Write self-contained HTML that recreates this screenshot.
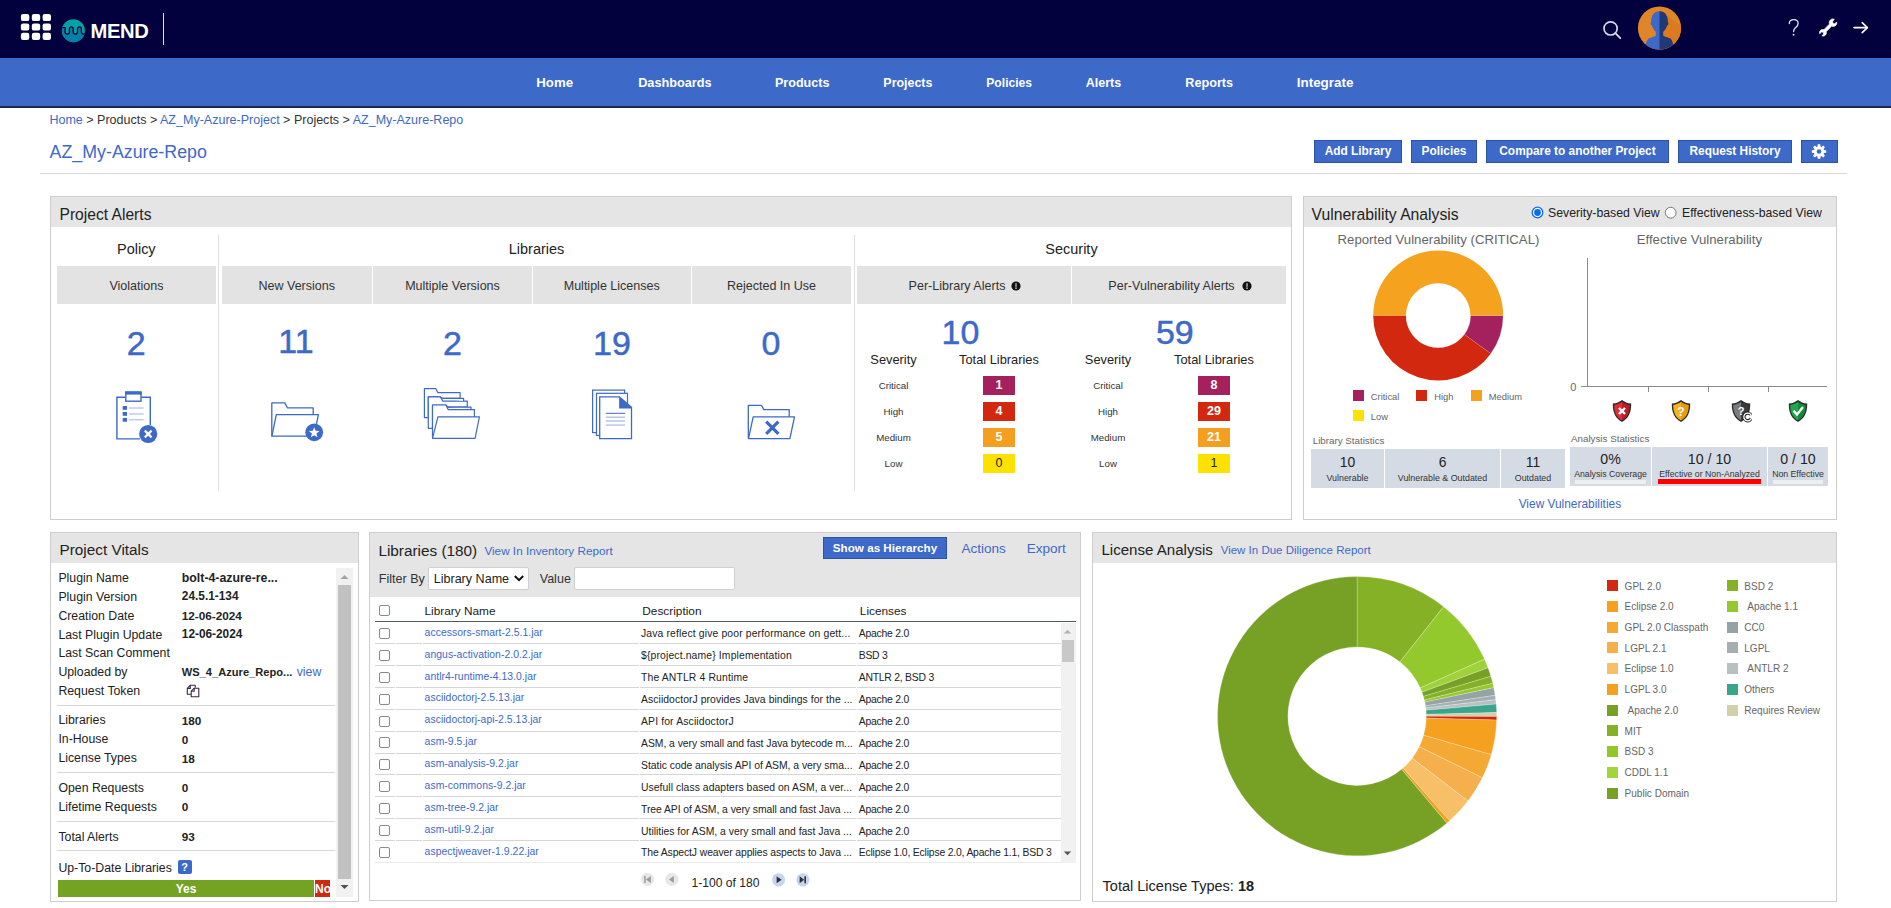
<!DOCTYPE html>
<html><head><meta charset="utf-8"><title>AZ_My-Azure-Repo</title>
<style>
*{box-sizing:border-box;margin:0;padding:0}
html,body{width:1891px;height:908px;overflow:hidden;background:#fff;font-family:"Liberation Sans",sans-serif;color:#333}
.a{position:absolute;display:block}
.t{position:absolute;white-space:nowrap}
</style></head><body>
<div class="a" style="left:0px;top:0px;width:1891px;height:58px;background:#02003d;"></div>
<svg class="a" style="left:0px;top:0px" width="60" height="50" viewBox="0 0 60 50"><rect x="20.9" y="13.9" width="8.4" height="7.2" rx="2.2" fill="#fff"/><rect x="31.8" y="13.9" width="8.4" height="7.2" rx="2.2" fill="#fff"/><rect x="42.6" y="13.9" width="8.4" height="7.2" rx="2.2" fill="#fff"/><rect x="20.9" y="23.4" width="8.4" height="7.2" rx="2.2" fill="#fff"/><rect x="31.8" y="23.4" width="8.4" height="7.2" rx="2.2" fill="#fff"/><rect x="42.6" y="23.4" width="8.4" height="7.2" rx="2.2" fill="#fff"/><rect x="20.9" y="32.8" width="8.4" height="7.2" rx="2.2" fill="#fff"/><rect x="31.8" y="32.8" width="8.4" height="7.2" rx="2.2" fill="#fff"/><rect x="42.6" y="32.8" width="8.4" height="7.2" rx="2.2" fill="#fff"/></svg>
<svg class="a" style="left:55px;top:13px" width="30" height="36" viewBox="0 0 30 36"><defs><clipPath id="lc"><circle cx="18.4" cy="17.7" r="11.5"/></clipPath></defs>
<circle cx="18.4" cy="17.7" r="11.5" fill="#00a3a5"/>
<g clip-path="url(#lc)"><path d="M0,14.6 H10.1 V19.1 Q10.1,21.1 12.25,21.1 Q14.4,21.1 14.4,19.1 V15.9 Q14.4,13.9 16.3,13.9 Q18.2,13.9 18.2,15.9 V19.1 Q18.2,21.1 20.35,21.1 Q22.5,21.1 22.5,19.1 V15.9 Q22.5,13.9 24.45,13.9 Q26.4,13.9 26.4,15.9 V19.1 Q26.4,21.1 28.5,21.1 H40 V40 H0 Z" fill="#0281a6" stroke="#02003d" stroke-width="1.3"/></g></svg>
<div class="t" style="top:21.30px;font-size:20.2px;line-height:20.2px;color:#fff;font-weight:bold;letter-spacing:-0.333px;left:90.50px;"><span>MEND</span></div>
<div class="a" style="left:163px;top:13px;width:1px;height:32px;background:#e0e0e8;"></div>
<svg class="a" style="left:1598px;top:15px" width="28" height="28" viewBox="0 0 28 28"><circle cx="12.6" cy="13.4" r="6.6" fill="none" stroke="#d9d9e3" stroke-width="1.7"/><line x1="17.4" y1="18.2" x2="22.3" y2="23.2" stroke="#d9d9e3" stroke-width="1.8" stroke-linecap="round"/></svg>
<svg class="a" style="left:1636px;top:4px" width="48" height="48" viewBox="0 0 48 48"><defs><clipPath id="av"><circle cx="23.5" cy="24" r="21.6"/></clipPath></defs>
<circle cx="23.5" cy="24" r="21.6" fill="#e08628"/>
<g clip-path="url(#av)">
<path d="M23.5,7 L46,22 L46,46 L23.5,46 Z" fill="#db7a1e"/>
<path d="M24,7.2 L23.5,7.2 C17.5,7.2 15.2,12 15.2,16.5 C15.2,18 14.6,18.3 14.6,19.4 C14.6,20.8 15.5,21.4 15.9,21.6 C16.6,24.5 18.3,26.6 19.8,27.8 L19.8,31.2 C19.8,32.2 17,32.8 13.5,34 C11.5,34.8 10.4,37 10,40 L9.6,48 L24,48 L24,7.2 Z" fill="#3d69c8"/>
<path d="M23.5,7.2 C29.5,7.2 31.8,12 31.8,16.5 C31.8,18 32.4,18.3 32.4,19.4 C32.4,20.8 31.5,21.4 31.1,21.6 C30.4,24.5 28.7,26.6 27.2,27.8 L27.2,31.2 C27.2,32.2 30,32.8 33.5,34 C35.5,34.8 36.6,37 37,40 L37.4,48 L23.5,48 Z" fill="#223877"/>
</g></svg>
<svg class="a" style="left:1785px;top:16px" width="18" height="22" viewBox="0 0 18 22"><path d="M4.3,7.6 C4.3,4.8 6.3,3.6 8.7,3.6 C11.2,3.6 13.1,5 13.1,7.5 C13.1,9.6 11.7,10.6 10.4,11.8 C9.2,12.9 8.6,13.8 8.6,15.6" fill="none" stroke="#e6e6ee" stroke-width="1.3" stroke-linecap="round"/><circle cx="8.6" cy="18.7" r="0.95" fill="#e6e6ee"/></svg>
<svg class="a" style="left:1815px;top:14px" width="26" height="26" viewBox="0 0 26 26"><path transform="translate(3.2,2.6) scale(0.78)" d="M20.5,3.2 C18,2.6 15.6,3.6 14.6,5.8 C14,7.1 14,8.4 14.5,9.6 L7.2,16.9 C6,16.4 4.6,16.5 3.5,17.2 C1.9,18.3 1.3,20.2 1.9,22 L4.4,19.6 L6.6,20.1 L7.1,22.3 L4.7,24.6 C6.4,25.3 8.4,24.8 9.6,23.3 C10.5,22.1 10.7,20.6 10.2,19.3 L17.3,12.2 C18.6,12.8 20.1,12.8 21.4,12.1 C23.3,11.1 24.2,8.9 23.7,6.8 L21.3,9.2 L19,8.8 L18.5,6.5 Z" fill="#fff" stroke="#fff" stroke-width="0.9"/></svg>
<svg class="a" style="left:1850px;top:18px" width="22" height="20" viewBox="0 0 22 20"><line x1="4" y1="9.6" x2="17.3" y2="9.6" stroke="#fff" stroke-width="1.6" stroke-linecap="round"/><polyline points="12.2,4.6 17.4,9.6 12.2,14.6" fill="none" stroke="#fff" stroke-width="1.6" stroke-linecap="round" stroke-linejoin="round"/></svg>
<div class="a" style="left:0px;top:58px;width:1891px;height:49px;background:#3d69c8;"></div>
<div class="a" style="left:0px;top:106px;width:1891px;height:1.6px;background:#1d2748;"></div>
<div class="t" style="top:76.37px;font-size:13.269px;line-height:13.269px;color:#fff;font-weight:bold;left:154.70px;width:800px;text-align:center;"><span>Home</span></div>
<div class="t" style="top:76.83px;font-size:12.728px;line-height:12.728px;color:#fff;font-weight:bold;left:274.90px;width:800px;text-align:center;"><span>Dashboards</span></div>
<div class="t" style="top:76.93px;font-size:12.601px;line-height:12.601px;color:#fff;font-weight:bold;left:402.20px;width:800px;text-align:center;"><span>Products</span></div>
<div class="t" style="top:77.06px;font-size:12.449px;line-height:12.449px;color:#fff;font-weight:bold;left:507.90px;width:800px;text-align:center;"><span>Projects</span></div>
<div class="t" style="top:77.34px;font-size:12.116px;line-height:12.116px;color:#fff;font-weight:bold;left:609.20px;width:800px;text-align:center;"><span>Policies</span></div>
<div class="t" style="top:77.00px;font-size:12.525px;line-height:12.525px;color:#fff;font-weight:bold;left:703.50px;width:800px;text-align:center;"><span>Alerts</span></div>
<div class="t" style="top:76.87px;font-size:12.671px;line-height:12.671px;color:#fff;font-weight:bold;left:809.20px;width:800px;text-align:center;"><span>Reports</span></div>
<div class="t" style="top:76.23px;font-size:13.436px;line-height:13.436px;color:#fff;font-weight:bold;left:925.10px;width:800px;text-align:center;"><span>Integrate</span></div>
<div class="t" style="top:113.60px;font-size:12.521px;line-height:12.521px;color:#333;left:49.40px;"><span><span style="color:#3d69c8">Home</span> &gt; Products &gt; <span style="color:#3d69c8">AZ_My-Azure-Project</span> &gt; Projects &gt; <span style="color:#3d69c8">AZ_My-Azure-Repo</span></span></div>
<div class="t" style="top:144.13px;font-size:17.801px;line-height:17.801px;color:#3d69c8;left:49.60px;"><span>AZ_My-Azure-Repo</span></div>
<div class="a" style="left:40px;top:173px;width:1807px;height:1px;background:#d7d7d7;"></div>
<div class="a" style="left:1314px;top:140px;width:88px;height:23px;background:#3d69c8;border:1px solid #2b52a6;"></div>
<div class="t" style="top:146.34px;font-size:11.89px;line-height:11.89px;color:#fff;font-weight:bold;left:958.00px;width:800px;text-align:center;"><span>Add Library</span></div>
<div class="a" style="left:1411px;top:140px;width:66px;height:23px;background:#3d69c8;border:1px solid #2b52a6;"></div>
<div class="t" style="top:146.34px;font-size:11.89px;line-height:11.89px;color:#fff;font-weight:bold;left:1044.00px;width:800px;text-align:center;"><span>Policies</span></div>
<div class="a" style="left:1486px;top:140px;width:183px;height:23px;background:#3d69c8;border:1px solid #2b52a6;"></div>
<div class="t" style="top:146.34px;font-size:11.89px;line-height:11.89px;color:#fff;font-weight:bold;left:1177.50px;width:800px;text-align:center;"><span>Compare to another Project</span></div>
<div class="a" style="left:1678px;top:140px;width:114px;height:23px;background:#3d69c8;border:1px solid #2b52a6;"></div>
<div class="t" style="top:146.34px;font-size:11.89px;line-height:11.89px;color:#fff;font-weight:bold;left:1335.00px;width:800px;text-align:center;"><span>Request History</span></div>
<div class="a" style="left:1801px;top:140px;width:37px;height:23px;background:#3d69c8;border:1px solid #2b52a6;"></div>
<svg class="a" style="left:1801px;top:140px" width="37" height="23" viewBox="0 0 37 23"><path d="M16.73,4.31 L19.27,4.31 L19.52,6.53 L20.44,6.91 L22.19,5.52 L23.98,7.31 L22.59,9.06 L22.97,9.98 L25.19,10.23 L25.19,12.77 L22.97,13.02 L22.59,13.94 L23.98,15.69 L22.19,17.48 L20.44,16.09 L19.52,16.47 L19.27,18.69 L16.73,18.69 L16.48,16.47 L15.56,16.09 L13.81,17.48 L12.02,15.69 L13.41,13.94 L13.03,13.02 L10.81,12.77 L10.81,10.23 L13.03,9.98 L13.41,9.06 L12.02,7.31 L13.81,5.52 L15.56,6.91 L16.48,6.53Z" fill="#fff"/><circle cx="18" cy="11.5" r="2.3" fill="#3d69c8"/></svg>
<div class="a" style="left:50px;top:196px;width:1242px;height:324px;background:#fff;border:1px solid #cdcdcd;"></div>
<div class="a" style="left:51px;top:197px;width:1240px;height:30px;background:#e5e5e5;"></div>
<div class="a" style="left:1303px;top:196px;width:534px;height:324px;background:#fff;border:1px solid #cdcdcd;"></div>
<div class="a" style="left:1304px;top:197px;width:532px;height:30px;background:#e5e5e5;"></div>
<div class="a" style="left:50px;top:532px;width:309px;height:370px;background:#fff;border:1px solid #cdcdcd;"></div>
<div class="a" style="left:51px;top:533px;width:307px;height:30px;background:#e5e5e5;"></div>
<div class="a" style="left:369px;top:532px;width:712px;height:369px;background:#fff;border:1px solid #cdcdcd;"></div>
<div class="a" style="left:370px;top:533px;width:710px;height:64px;background:#e5e5e5;"></div>
<div class="a" style="left:1092px;top:532px;width:745px;height:370px;background:#fff;border:1px solid #cdcdcd;"></div>
<div class="a" style="left:1093px;top:533px;width:743px;height:30px;background:#e5e5e5;"></div>
<div class="t" style="top:206.98px;font-size:15.615px;line-height:15.615px;color:#222;left:59.50px;"><span>Project Alerts</span></div>
<div class="t" style="top:206.97px;font-size:15.745px;line-height:15.745px;color:#222;left:1311.50px;"><span>Vulnerability Analysis</span></div>
<div class="t" style="top:542.21px;font-size:15.345px;line-height:15.345px;color:#222;left:59.50px;"><span>Project Vitals</span></div>
<div class="t" style="top:542.51px;font-size:15.346px;line-height:15.346px;color:#222;left:378.40px;"><span>Libraries (180)</span></div>
<div class="t" style="top:545.06px;font-size:11.745px;line-height:11.745px;color:#3d69c8;left:484.40px;"><span>View In Inventory Report</span></div>
<div class="t" style="top:542.03px;font-size:15.083px;line-height:15.083px;color:#222;left:1101.40px;"><span>License Analysis</span></div>
<div class="t" style="top:545.05px;font-size:11.513px;line-height:11.513px;color:#3d69c8;left:1220.70px;"><span>View In Due Diligence Report</span></div>
<div class="t" style="top:241.94px;font-size:14.48px;line-height:14.48px;color:#222;left:-263.70px;width:800px;text-align:center;"><span>Policy</span></div>
<div class="t" style="top:242.14px;font-size:14.48px;line-height:14.48px;color:#222;left:136.50px;width:800px;text-align:center;"><span>Libraries</span></div>
<div class="t" style="top:242.14px;font-size:14.48px;line-height:14.48px;color:#222;left:671.50px;width:800px;text-align:center;"><span>Security</span></div>
<div class="a" style="left:218px;top:235px;width:1px;height:256px;background:#dedede;"></div>
<div class="a" style="left:854px;top:235px;width:1px;height:256px;background:#dedede;"></div>
<div class="a" style="left:57px;top:266px;width:159px;height:38px;background:#e3e3e3;"></div>
<div class="a" style="left:222px;top:266px;width:149.5px;height:38px;background:#e3e3e3;"></div>
<div class="a" style="left:373px;top:266px;width:159px;height:38px;background:#e3e3e3;"></div>
<div class="a" style="left:533px;top:266px;width:157.5px;height:38px;background:#e3e3e3;"></div>
<div class="a" style="left:692px;top:266px;width:159px;height:38px;background:#e3e3e3;"></div>
<div class="a" style="left:857px;top:266px;width:213.5px;height:38px;background:#e3e3e3;"></div>
<div class="a" style="left:1072px;top:266px;width:214px;height:38px;background:#e3e3e3;"></div>
<div class="t" style="top:279.58px;font-size:12.548px;line-height:12.548px;color:#333;left:-263.50px;width:800px;text-align:center;"><span>Violations</span></div>
<div class="t" style="top:279.58px;font-size:12.548px;line-height:12.548px;color:#333;left:-103.25px;width:800px;text-align:center;"><span>New Versions</span></div>
<div class="t" style="top:279.58px;font-size:12.548px;line-height:12.548px;color:#333;left:52.50px;width:800px;text-align:center;"><span>Multiple Versions</span></div>
<div class="t" style="top:279.58px;font-size:12.548px;line-height:12.548px;color:#333;left:211.75px;width:800px;text-align:center;"><span>Multiple Licenses</span></div>
<div class="t" style="top:279.58px;font-size:12.548px;line-height:12.548px;color:#333;left:371.50px;width:800px;text-align:center;"><span>Rejected In Use</span></div>
<div class="t" style="top:279.58px;font-size:12.548px;line-height:12.548px;color:#333;left:557.00px;width:800px;text-align:center;"><span>Per-Library Alerts</span></div>
<div class="t" style="top:279.58px;font-size:12.548px;line-height:12.548px;color:#333;left:771.50px;width:800px;text-align:center;"><span>Per-Vulnerability Alerts</span></div>
<svg class="a" style="left:1010px;top:279.5px" width="12" height="12" viewBox="0 0 12 12"><circle cx="6" cy="6" r="4.6" fill="#111"/><path d="M5.3,3.3 H6.7 L6.5,6.9 H5.5 Z" fill="#ccc"/><rect x="5.3" y="7.5" width="1.4" height="1.3" fill="#fff"/></svg>
<svg class="a" style="left:1240.5px;top:279.5px" width="12" height="12" viewBox="0 0 12 12"><circle cx="6" cy="6" r="4.6" fill="#111"/><path d="M5.3,3.3 H6.7 L6.5,6.9 H5.5 Z" fill="#ccc"/><rect x="5.3" y="7.5" width="1.4" height="1.3" fill="#fff"/></svg>
<div class="t" style="top:325.72px;font-size:33.996px;line-height:33.996px;color:#3d69c8;left:-263.70px;width:800px;text-align:center;-webkit-text-stroke:0.5px #3d69c8;"><span>2</span></div>
<div class="t" style="top:324.02px;font-size:33.996px;line-height:33.996px;color:#3d69c8;left:-104.00px;width:800px;text-align:center;-webkit-text-stroke:0.5px #3d69c8;"><span>11</span></div>
<div class="t" style="top:325.72px;font-size:33.996px;line-height:33.996px;color:#3d69c8;left:52.50px;width:800px;text-align:center;-webkit-text-stroke:0.5px #3d69c8;"><span>2</span></div>
<div class="t" style="top:325.72px;font-size:33.996px;line-height:33.996px;color:#3d69c8;left:212.00px;width:800px;text-align:center;-webkit-text-stroke:0.5px #3d69c8;"><span>19</span></div>
<div class="t" style="top:325.72px;font-size:33.996px;line-height:33.996px;color:#3d69c8;left:371.00px;width:800px;text-align:center;-webkit-text-stroke:0.5px #3d69c8;"><span>0</span></div>
<div class="t" style="top:314.72px;font-size:33.996px;line-height:33.996px;color:#3d69c8;left:560.50px;width:800px;text-align:center;-webkit-text-stroke:0.5px #3d69c8;"><span>10</span></div>
<div class="t" style="top:314.72px;font-size:33.996px;line-height:33.996px;color:#3d69c8;left:774.80px;width:800px;text-align:center;-webkit-text-stroke:0.5px #3d69c8;"><span>59</span></div>
<div class="t" style="top:353.53px;font-size:12.843px;line-height:12.843px;color:#222;left:493.50px;width:800px;text-align:center;"><span>Severity</span></div>
<div class="t" style="top:353.53px;font-size:12.843px;line-height:12.843px;color:#222;left:599.00px;width:800px;text-align:center;"><span>Total Libraries</span></div>
<div class="t" style="top:381.35px;font-size:9.742px;line-height:9.742px;color:#333;left:493.50px;width:800px;text-align:center;"><span>Critical</span></div>
<div class="a" style="left:983px;top:376px;width:32px;height:18.5px;background:#a4215e;"></div>
<div class="t" style="top:379.32px;font-size:12.5px;line-height:12.5px;color:#fff;font-weight:bold;left:599.00px;width:800px;text-align:center;"><span>1</span></div>
<div class="t" style="top:407.35px;font-size:9.742px;line-height:9.742px;color:#333;left:493.50px;width:800px;text-align:center;"><span>High</span></div>
<div class="a" style="left:983px;top:402px;width:32px;height:18.5px;background:#d2280f;"></div>
<div class="t" style="top:405.32px;font-size:12.5px;line-height:12.5px;color:#fff;font-weight:bold;left:599.00px;width:800px;text-align:center;"><span>4</span></div>
<div class="t" style="top:433.35px;font-size:9.742px;line-height:9.742px;color:#333;left:493.50px;width:800px;text-align:center;"><span>Medium</span></div>
<div class="a" style="left:983px;top:428px;width:32px;height:18.5px;background:#f49f1f;"></div>
<div class="t" style="top:431.32px;font-size:12.5px;line-height:12.5px;color:#fff;font-weight:bold;left:599.00px;width:800px;text-align:center;"><span>5</span></div>
<div class="t" style="top:459.35px;font-size:9.742px;line-height:9.742px;color:#333;left:493.50px;width:800px;text-align:center;"><span>Low</span></div>
<div class="a" style="left:983px;top:454px;width:32px;height:18.5px;background:#fde100;"></div>
<div class="t" style="top:457.32px;font-size:12.5px;line-height:12.5px;color:#222;left:599.00px;width:800px;text-align:center;"><span>0</span></div>
<div class="t" style="top:353.53px;font-size:12.843px;line-height:12.843px;color:#222;left:708.00px;width:800px;text-align:center;"><span>Severity</span></div>
<div class="t" style="top:353.53px;font-size:12.843px;line-height:12.843px;color:#222;left:814.00px;width:800px;text-align:center;"><span>Total Libraries</span></div>
<div class="t" style="top:381.35px;font-size:9.742px;line-height:9.742px;color:#333;left:708.00px;width:800px;text-align:center;"><span>Critical</span></div>
<div class="a" style="left:1198px;top:376px;width:32px;height:18.5px;background:#a4215e;"></div>
<div class="t" style="top:379.32px;font-size:12.5px;line-height:12.5px;color:#fff;font-weight:bold;left:814.00px;width:800px;text-align:center;"><span>8</span></div>
<div class="t" style="top:407.35px;font-size:9.742px;line-height:9.742px;color:#333;left:708.00px;width:800px;text-align:center;"><span>High</span></div>
<div class="a" style="left:1198px;top:402px;width:32px;height:18.5px;background:#d2280f;"></div>
<div class="t" style="top:405.32px;font-size:12.5px;line-height:12.5px;color:#fff;font-weight:bold;left:814.00px;width:800px;text-align:center;"><span>29</span></div>
<div class="t" style="top:433.35px;font-size:9.742px;line-height:9.742px;color:#333;left:708.00px;width:800px;text-align:center;"><span>Medium</span></div>
<div class="a" style="left:1198px;top:428px;width:32px;height:18.5px;background:#f49f1f;"></div>
<div class="t" style="top:431.32px;font-size:12.5px;line-height:12.5px;color:#fff;font-weight:bold;left:814.00px;width:800px;text-align:center;"><span>21</span></div>
<div class="t" style="top:459.35px;font-size:9.742px;line-height:9.742px;color:#333;left:708.00px;width:800px;text-align:center;"><span>Low</span></div>
<div class="a" style="left:1198px;top:454px;width:32px;height:18.5px;background:#fde100;"></div>
<div class="t" style="top:457.32px;font-size:12.5px;line-height:12.5px;color:#222;left:814.00px;width:800px;text-align:center;"><span>1</span></div>
<svg class="a" style="left:100px;top:380px" width="70" height="70" viewBox="0 0 70 70"><g fill="none" stroke="#3d69c8" stroke-width="1.4">
<path d="M25.6,17.3 H16.9 V58.9 H40 M50.3,45 V17.3 H41.2"/>
<rect x="25.8" y="12.6" width="15.2" height="8.6"/>
</g>
<rect x="25.1" y="11.2" width="16.6" height="3.4" fill="#3d69c8"/>
<rect x="22.7" y="26" width="4.3" height="3.8" fill="#3d69c8"/>
<rect x="22.7" y="32" width="4.3" height="3.8" fill="#3d69c8"/>
<rect x="22.7" y="37.9" width="4.3" height="3.8" fill="#3d69c8"/>
<g stroke="#a9b9e6" stroke-width="1.1"><line x1="29" y1="28" x2="43.6" y2="28"/><line x1="29" y1="34" x2="43.6" y2="34"/><line x1="29" y1="39.8" x2="43.6" y2="39.8"/></g>
<circle cx="48.2" cy="54" r="9.1" fill="#3d69c8"/>
<g stroke="#fff" stroke-width="2.2" stroke-linecap="square"><line x1="45.6" y1="51.4" x2="50.8" y2="56.6"/><line x1="50.8" y1="51.4" x2="45.6" y2="56.6"/></g></svg>
<svg class="a" style="left:260px;top:385px" width="70" height="60" viewBox="0 0 70 60"><g fill="none" stroke="#3d69c8" stroke-width="1.3" stroke-linejoin="round">
<path d="M11.8,51.2 V17.9 H24.8 L27.4,22.8 H53.2 V29.7"/>
<path d="M11.9,51.2 L16.3,29.7 H58.4 L54,51.2 Z"/>
</g>
<circle cx="54.2" cy="47.3" r="8.9" fill="#3d69c8"/>
<path d="M54.20,42.20 L55.61,45.86 L59.53,46.07 L56.48,48.54 L57.49,52.33 L54.20,50.20 L50.91,52.33 L51.92,48.54 L48.87,46.07 L52.79,45.86Z" fill="#fff"/></svg>
<svg class="a" style="left:415px;top:380px" width="70" height="65" viewBox="0 0 70 65"><g fill="#fff" stroke="#3d69c8" stroke-width="1.2" stroke-linejoin="round">
<path d="M9.4,37.6 V8.7 H20.8 L22.9,12.6 H45.1 V18.4 H27.9 L25.4,16.9 H13.3 V37.6 Z"/>
<path d="M13.3,48.3 V16.9 H25.4 L27.9,21.1 H52.3 V27.2 H33.3 L30.8,25 H17.5 V48.3 Z"/>
<path d="M27.6,18.3 H48.6 V21.1 M32.6,27.2 H56 V29.7"/>
<path d="M17.5,58.3 V25 H30.8 L33.3,29.7 H59.4 V36.9"/>
<path d="M17.5,58.3 L22.9,36.9 H64.4 L60.1,58.3 Z"/>
</g></svg>
<svg class="a" style="left:580px;top:380px" width="65" height="65" viewBox="0 0 65 65"><g fill="#fff" stroke="#3d69c8" stroke-width="1.2">
<rect x="12.6" y="10.1" width="32" height="42.5"/>
<rect x="16.5" y="13.3" width="31" height="42.2"/>
<path d="M19.7,16.8 H39.4 L51.5,27.4 V58.6 H19.7 Z" stroke-width="1.3"/>
</g>
<path d="M39.1,16.8 L51.6,27.4 L51.6,28.6 L39.1,28.6 Z" fill="#3d69c8"/>
<g stroke="#3d69c8" stroke-width="1"><line x1="25.8" y1="33.3" x2="45.1" y2="33.3"/></g>
<g stroke="#a6b6e4" stroke-width="1.2"><line x1="25.8" y1="37.2" x2="45.1" y2="37.2"/><line x1="25.8" y1="41" x2="45.1" y2="41"/><line x1="25.8" y1="45.1" x2="45.1" y2="45.1"/></g></svg>
<svg class="a" style="left:735px;top:390px" width="70" height="60" viewBox="0 0 70 60"><g fill="none" stroke="#3d69c8" stroke-width="1.3" stroke-linejoin="round">
<path d="M13.3,48.6 V15.3 H26.4 L28.8,19.6 H54.2 V26.8"/>
<path d="M13.5,48.6 L18.2,26.8 H59.5 L54.9,48.6 Z"/>
</g>
<g stroke="#3d69c8" stroke-width="3.2" stroke-linecap="butt"><line x1="31.2" y1="31.6" x2="43.4" y2="43.8"/><line x1="43.4" y1="31.6" x2="31.2" y2="43.8"/></g></svg>
<svg class="a" style="left:1530px;top:205px" width="16" height="16" viewBox="0 0 16 16"><circle cx="7.5" cy="7.5" r="5.3" fill="#fff" stroke="#0b6cf5" stroke-width="1.3"/><circle cx="7.5" cy="7.5" r="3.4" fill="#0b6cf5"/></svg>
<div class="t" style="top:207.00px;font-size:12.287px;line-height:12.287px;color:#222;left:1548.00px;"><span>Severity-based View</span></div>
<svg class="a" style="left:1663px;top:205px" width="16" height="16" viewBox="0 0 16 16"><circle cx="7.7" cy="7.7" r="5.4" fill="#fff" stroke="#777" stroke-width="1"/></svg>
<div class="t" style="top:207.02px;font-size:12.268px;line-height:12.268px;color:#222;left:1682.00px;"><span>Effectiveness-based View</span></div>
<div class="t" style="top:233.13px;font-size:13.197px;line-height:13.197px;color:#666;left:1038.50px;width:800px;text-align:center;"><span>Reported Vulnerability (CRITICAL)</span></div>
<div class="t" style="top:233.13px;font-size:13.197px;line-height:13.197px;color:#666;left:1299.40px;width:800px;text-align:center;"><span>Effective Vulnerability</span></div>
<svg class="a" style="left:1368px;top:245px" width="140" height="140" viewBox="0 0 140 140"><path d="M135.200,70.500 A65,65 0 0 1 122.786,108.706 L96.331,89.485 A32.3,32.3 0 0 0 102.500,70.500 Z" fill="#a4215e" stroke="rgba(255,255,255,0.7)" stroke-width="0.4"/><path d="M122.786,108.706 A65,65 0 0 1 5.200,70.500 L37.900,70.500 A32.3,32.3 0 0 0 96.331,89.485 Z" fill="#d2280f" stroke="none" stroke-width="0"/><path d="M5.200,70.500 A65,65 0 0 1 135.200,70.489 L102.500,70.494 A32.3,32.3 0 0 0 37.900,70.500 Z" fill="#f5a31f" stroke="none" stroke-width="0"/></svg>
<div class="a" style="left:1353px;top:390.4px;width:11px;height:11px;background:#a4215e;"></div>
<div class="t" style="top:392.87px;font-size:9.365px;line-height:9.365px;color:#666;left:1370.80px;"><span>Critical</span></div>
<div class="a" style="left:1416.4px;top:390.4px;width:11px;height:11px;background:#d2280f;"></div>
<div class="t" style="top:392.87px;font-size:9.365px;line-height:9.365px;color:#666;left:1434.20px;"><span>High</span></div>
<div class="a" style="left:1471px;top:390.4px;width:11px;height:11px;background:#f4a11f;"></div>
<div class="t" style="top:392.87px;font-size:9.365px;line-height:9.365px;color:#666;left:1488.80px;"><span>Medium</span></div>
<div class="a" style="left:1353px;top:410.2px;width:11px;height:11px;background:#fde100;"></div>
<div class="t" style="top:412.67px;font-size:9.365px;line-height:9.365px;color:#666;left:1370.80px;"><span>Low</span></div>
<div class="a" style="left:1587px;top:258px;width:1px;height:129px;background:#8a8a8a;"></div>
<div class="a" style="left:1581px;top:386px;width:246px;height:1px;background:#8a8a8a;"></div>
<div class="a" style="left:1648px;top:386px;width:1px;height:6px;background:#8a8a8a;"></div>
<div class="a" style="left:1707.5px;top:386px;width:1px;height:6px;background:#8a8a8a;"></div>
<div class="a" style="left:1768px;top:386px;width:1px;height:6px;background:#8a8a8a;"></div>
<div class="t" style="top:381.69px;font-size:11px;line-height:11px;color:#666;left:1173.40px;width:800px;text-align:center;"><span>0</span></div>
<svg class="a" style="left:1612px;top:398.5px" width="21" height="25" viewBox="0 0 21 25"><path d="M10,1 C12.5,3 15.5,4.2 19.2,4.6 C19.4,13.5 16.5,19.5 10,23 C3.5,19.5 0.6,13.5 0.8,4.6 C4.5,4.2 7.5,3 10,1 Z" fill="#2a2a2a"/>
<path d="M10,2.8 C12.3,4.5 15,5.5 17.8,5.9 C17.9,13.3 15.3,18.4 10,21.4 Z" fill="#b81e27"/>
<path d="M10,2.8 C7.7,4.5 5,5.5 2.2,5.9 C2.1,13.3 4.7,18.4 10,21.4 Z" fill="#e42b33"/><g stroke="#fff" stroke-width="2.4"><line x1="7" y1="9" x2="13" y2="15"/><line x1="13" y1="9" x2="7" y2="15"/></g></svg>
<svg class="a" style="left:1671px;top:398.5px" width="21" height="25" viewBox="0 0 21 25"><path d="M10,1 C12.5,3 15.5,4.2 19.2,4.6 C19.4,13.5 16.5,19.5 10,23 C3.5,19.5 0.6,13.5 0.8,4.6 C4.5,4.2 7.5,3 10,1 Z" fill="#2a2a2a"/>
<path d="M10,2.8 C12.3,4.5 15,5.5 17.8,5.9 C17.9,13.3 15.3,18.4 10,21.4 Z" fill="#e79a12"/>
<path d="M10,2.8 C7.7,4.5 5,5.5 2.2,5.9 C2.1,13.3 4.7,18.4 10,21.4 Z" fill="#f6b21e"/><text x="10" y="16.5" font-family="Liberation Sans" font-weight="bold" font-size="12" fill="#fff" text-anchor="middle">?</text></svg>
<svg class="a" style="left:1730.5px;top:398.5px" width="21" height="25" viewBox="0 0 21 25"><path d="M10,1 C12.5,3 15.5,4.2 19.2,4.6 C19.4,13.5 16.5,19.5 10,23 C3.5,19.5 0.6,13.5 0.8,4.6 C4.5,4.2 7.5,3 10,1 Z" fill="#2a2a2a"/>
<path d="M10,2.8 C12.3,4.5 15,5.5 17.8,5.9 C17.9,13.3 15.3,18.4 10,21.4 Z" fill="#3a3a3a"/>
<path d="M10,2.8 C7.7,4.5 5,5.5 2.2,5.9 C2.1,13.3 4.7,18.4 10,21.4 Z" fill="#7a7a7a"/><text x="10" y="15.5" font-family="Liberation Sans" font-weight="bold" font-size="11" fill="#fff" text-anchor="middle">?</text><circle cx="16.7" cy="18" r="5" fill="#fff" stroke="#222" stroke-width="1"/><path d="M19,16.5 A2.7,2.7 0 1 0 19.2,19" fill="none" stroke="#222" stroke-width="1.1"/></svg>
<svg class="a" style="left:1788.3px;top:398.5px" width="21" height="25" viewBox="0 0 21 25"><path d="M10,1 C12.5,3 15.5,4.2 19.2,4.6 C19.4,13.5 16.5,19.5 10,23 C3.5,19.5 0.6,13.5 0.8,4.6 C4.5,4.2 7.5,3 10,1 Z" fill="#2a2a2a"/>
<path d="M10,2.8 C12.3,4.5 15,5.5 17.8,5.9 C17.9,13.3 15.3,18.4 10,21.4 Z" fill="#138a38"/>
<path d="M10,2.8 C7.7,4.5 5,5.5 2.2,5.9 C2.1,13.3 4.7,18.4 10,21.4 Z" fill="#1fa84a"/><polyline points="5.5,11.8 9,15.5 15,8" fill="none" stroke="#fff" stroke-width="2.4"/></svg>
<div class="t" style="top:435.91px;font-size:9.79px;line-height:9.79px;color:#666;left:1312.70px;"><span>Library Statistics</span></div>
<div class="a" style="left:1311px;top:449px;width:73px;height:39px;background:#d5dbe5;"></div>
<div class="t" style="top:456.13px;font-size:13.904px;line-height:13.904px;color:#222;left:947.50px;width:800px;text-align:center;"><span>10</span></div>
<div class="t" style="top:473.69px;font-size:8.877px;line-height:8.877px;color:#333;left:947.50px;width:800px;text-align:center;"><span>Vulnerable</span></div>
<div class="a" style="left:1385px;top:449px;width:115px;height:39px;background:#d5dbe5;"></div>
<div class="t" style="top:456.13px;font-size:13.904px;line-height:13.904px;color:#222;left:1042.50px;width:800px;text-align:center;"><span>6</span></div>
<div class="t" style="top:473.69px;font-size:8.877px;line-height:8.877px;color:#333;left:1042.50px;width:800px;text-align:center;"><span>Vulnerable &amp; Outdated</span></div>
<div class="a" style="left:1501px;top:449px;width:64px;height:39px;background:#d5dbe5;"></div>
<div class="t" style="top:456.13px;font-size:13.904px;line-height:13.904px;color:#222;left:1133.00px;width:800px;text-align:center;"><span>11</span></div>
<div class="t" style="top:473.69px;font-size:8.877px;line-height:8.877px;color:#333;left:1133.00px;width:800px;text-align:center;"><span>Outdated</span></div>
<div class="t" style="top:433.91px;font-size:9.79px;line-height:9.79px;color:#666;left:1571.00px;"><span>Analysis Statistics</span></div>
<div class="a" style="left:1570px;top:447px;width:81px;height:39px;background:#d5dbe5;"></div>
<div class="t" style="top:452.00px;font-size:14.172px;line-height:14.172px;color:#222;left:1210.50px;width:800px;text-align:center;"><span>0%</span></div>
<div class="t" style="top:469.51px;font-size:8.725px;line-height:8.725px;color:#333;left:1210.50px;width:800px;text-align:center;"><span>Analysis Coverage</span></div>
<div class="a" style="left:1652px;top:447px;width:115px;height:39px;background:#d5dbe5;"></div>
<div class="t" style="top:452.00px;font-size:14.172px;line-height:14.172px;color:#222;left:1309.50px;width:800px;text-align:center;"><span>10 / 10</span></div>
<div class="t" style="top:469.51px;font-size:8.725px;line-height:8.725px;color:#333;left:1309.50px;width:800px;text-align:center;"><span>Effective or Non-Analyzed</span></div>
<div class="a" style="left:1768px;top:447px;width:60px;height:39px;background:#d5dbe5;"></div>
<div class="t" style="top:452.00px;font-size:14.172px;line-height:14.172px;color:#222;left:1398.00px;width:800px;text-align:center;"><span>0 / 10</span></div>
<div class="t" style="top:469.51px;font-size:8.725px;line-height:8.725px;color:#333;left:1398.00px;width:800px;text-align:center;"><span>Non Effective</span></div>
<div class="a" style="left:1575px;top:479.5px;width:71px;height:4.5px;background:#efefef;"></div>
<div class="a" style="left:1658px;top:479px;width:103px;height:5px;background:#ff0000;"></div>
<div class="a" style="left:1773px;top:479.5px;width:50px;height:4.5px;background:#efefef;"></div>
<div class="t" style="top:498.72px;font-size:11.909px;line-height:11.909px;color:#3d69c8;left:1169.90px;width:800px;text-align:center;"><span>View Vulnerabilities</span></div>
<div class="t" style="top:572.48px;font-size:12.311px;line-height:12.311px;color:#222;left:58.40px;"><span>Plugin Name</span></div>
<div class="t" style="top:572.46px;font-size:12.332px;line-height:12.332px;color:#222;font-weight:bold;left:181.80px;"><span>bolt-4-azure-re...</span></div>
<div class="t" style="top:591.08px;font-size:12.311px;line-height:12.311px;color:#222;left:58.40px;"><span>Plugin Version</span></div>
<div class="t" style="top:591.45px;font-size:11.875px;line-height:11.875px;color:#222;font-weight:bold;left:181.80px;"><span>24.5.1-134</span></div>
<div class="t" style="top:609.88px;font-size:12.311px;line-height:12.311px;color:#222;left:58.40px;"><span>Creation Date</span></div>
<div class="t" style="top:610.35px;font-size:11.755px;line-height:11.755px;color:#222;font-weight:bold;left:181.80px;"><span>12-06-2024</span></div>
<div class="t" style="top:628.78px;font-size:12.311px;line-height:12.311px;color:#222;left:58.40px;"><span>Last Plugin Update</span></div>
<div class="t" style="top:629.16px;font-size:11.856px;line-height:11.856px;color:#222;font-weight:bold;left:181.80px;"><span>12-06-2024</span></div>
<div class="t" style="top:647.48px;font-size:12.311px;line-height:12.311px;color:#222;left:58.40px;"><span>Last Scan Comment</span></div>
<div class="t" style="top:666.28px;font-size:12.311px;line-height:12.311px;color:#222;left:58.40px;"><span>Uploaded by</span></div>
<div class="t" style="top:667.28px;font-size:11.127px;line-height:11.127px;color:#222;font-weight:bold;left:181.80px;"><span>WS_4_Azure_Repo...</span></div>
<div class="t" style="top:684.98px;font-size:12.311px;line-height:12.311px;color:#222;left:58.40px;"><span>Request Token</span></div>
<div class="t" style="top:714.38px;font-size:12.311px;line-height:12.311px;color:#222;left:58.40px;"><span>Libraries</span></div>
<div class="t" style="top:714.85px;font-size:11.755px;line-height:11.755px;color:#222;font-weight:bold;left:181.80px;"><span>180</span></div>
<div class="t" style="top:733.48px;font-size:12.311px;line-height:12.311px;color:#222;left:58.40px;"><span>In-House</span></div>
<div class="t" style="top:733.95px;font-size:11.755px;line-height:11.755px;color:#222;font-weight:bold;left:181.80px;"><span>0</span></div>
<div class="t" style="top:752.38px;font-size:12.311px;line-height:12.311px;color:#222;left:58.40px;"><span>License Types</span></div>
<div class="t" style="top:752.85px;font-size:11.755px;line-height:11.755px;color:#222;font-weight:bold;left:181.80px;"><span>18</span></div>
<div class="t" style="top:781.68px;font-size:12.311px;line-height:12.311px;color:#222;left:58.40px;"><span>Open Requests</span></div>
<div class="t" style="top:782.15px;font-size:11.755px;line-height:11.755px;color:#222;font-weight:bold;left:181.80px;"><span>0</span></div>
<div class="t" style="top:800.58px;font-size:12.311px;line-height:12.311px;color:#222;left:58.40px;"><span>Lifetime Requests</span></div>
<div class="t" style="top:801.05px;font-size:11.755px;line-height:11.755px;color:#222;font-weight:bold;left:181.80px;"><span>0</span></div>
<div class="t" style="top:830.58px;font-size:12.311px;line-height:12.311px;color:#222;left:58.40px;"><span>Total Alerts</span></div>
<div class="t" style="top:831.05px;font-size:11.755px;line-height:11.755px;color:#222;font-weight:bold;left:181.80px;"><span>93</span></div>
<div class="t" style="top:861.58px;font-size:12.311px;line-height:12.311px;color:#222;left:58.40px;"><span>Up-To-Date Libraries</span></div>
<div class="t" style="top:666.28px;font-size:12.311px;line-height:12.311px;color:#3d69c8;left:296.70px;"><span>view</span></div>
<svg class="a" style="left:185px;top:683px" width="16" height="16" viewBox="0 0 16 16"><g fill="none" stroke="#3a2a40" stroke-width="1.1" stroke-linejoin="round"><path d="M10.2,4.8 V2.3 H5.3 L2.3,5.4 V11.3 H6"/><path d="M5.3,2.3 V5.4 H2.3"/><path d="M6.2,13.7 V8.2 L9.2,5.2 H13.8 V13.7 Z" fill="#fff"/><path d="M9.2,5.2 V8.2 H6.2"/></g></svg>
<div class="a" style="left:57px;top:705px;width:278px;height:1px;background:#d6d6d6;"></div>
<div class="a" style="left:57px;top:772px;width:278px;height:1px;background:#d6d6d6;"></div>
<div class="a" style="left:57px;top:821px;width:278px;height:1px;background:#d6d6d6;"></div>
<div class="a" style="left:57px;top:850px;width:278px;height:1px;background:#d6d6d6;"></div>
<div class="a" style="left:177.6px;top:860.3px;width:14.2px;height:13.6px;background:#3d69c8;border-radius:2px;"></div>
<div class="t" style="top:861.89px;font-size:11px;line-height:11px;color:#fff;font-weight:bold;left:-215.30px;width:800px;text-align:center;"><span>?</span></div>
<div class="a" style="left:58px;top:880px;width:256px;height:16.5px;background:#74a323;"></div>
<div class="a" style="left:315px;top:880px;width:15px;height:16.5px;background:#d2280f;"></div>
<div class="t" style="top:883.34px;font-size:12px;line-height:12px;color:#fff;font-weight:bold;left:-214.00px;width:800px;text-align:center;"><span>Yes</span></div>
<div class="t" style="left:315px;top:883.34px;width:15px;overflow:hidden;font-size:12px;line-height:12px;color:#fff;font-weight:bold">No</div>
<div class="a" style="left:336px;top:568px;width:17px;height:329px;background:#f1f1f1;"></div>
<div class="a" style="left:338px;top:584.7px;width:13px;height:294px;background:#c1c1c1;"></div>
<svg class="a" style="left:336px;top:570px" width="17" height="14" viewBox="0 0 17 14"><path d="M4.5,9 L8.5,5 L12.5,9 Z" fill="#a3a3a3"/></svg>
<svg class="a" style="left:336px;top:880px" width="17" height="14" viewBox="0 0 17 14"><path d="M4.5,5 L8.5,9 L12.5,5 Z" fill="#505050"/></svg>
<div class="a" style="left:823px;top:537px;width:124px;height:22px;background:#3d69c8;border:1px solid #2b52a6;"></div>
<div class="t" style="top:541.92px;font-size:11.667px;line-height:11.667px;color:#fff;font-weight:bold;left:485.00px;width:800px;text-align:center;"><span>Show as Hierarchy</span></div>
<div class="t" style="top:541.73px;font-size:13.549px;line-height:13.549px;color:#3d69c8;left:583.60px;width:800px;text-align:center;"><span>Actions</span></div>
<div class="t" style="top:541.73px;font-size:13.549px;line-height:13.549px;color:#3d69c8;left:646.20px;width:800px;text-align:center;"><span>Export</span></div>
<div class="t" style="top:573.36px;font-size:12.57px;line-height:12.57px;color:#333;left:378.80px;"><span>Filter By</span></div>
<div class="a" style="left:428px;top:567px;width:101px;height:23px;background:#fff;border:1px solid #cfcfcf;border-radius:2px;"></div>
<div class="t" style="top:572.96px;font-size:12.57px;line-height:12.57px;color:#222;left:433.70px;"><span>Library Name</span></div>
<svg class="a" style="left:511px;top:570px" width="16" height="16" viewBox="0 0 16 16"><polyline points="3.8,6 8,10.2 12.2,6" fill="none" stroke="#111" stroke-width="2"/></svg>
<div class="t" style="top:572.96px;font-size:12.57px;line-height:12.57px;color:#333;left:539.70px;"><span>Value</span></div>
<div class="a" style="left:574px;top:567px;width:161px;height:23px;background:#fff;border:1px solid #cfcfcf;border-radius:2px;"></div>
<div class="a" style="left:379px;top:605px;width:11px;height:11px;background:#fff;border:1px solid #8a8a8a;border-radius:2px;"></div>
<div class="t" style="top:606.38px;font-size:11.834px;line-height:11.834px;color:#222;left:424.50px;"><span>Library Name</span></div>
<div class="t" style="top:606.38px;font-size:11.834px;line-height:11.834px;color:#222;left:642.30px;"><span>Description</span></div>
<div class="t" style="top:606.18px;font-size:11.834px;line-height:11.834px;color:#222;left:859.80px;"><span>Licenses</span></div>
<div class="a" style="left:375px;top:620.6px;width:701px;height:1.5px;background:#555a60;"></div>
<div class="a" style="left:379px;top:628px;width:11px;height:11px;background:#fff;border:1px solid #8a8a8a;border-radius:2px;"></div>
<div class="t" style="top:627.70px;font-size:10.4px;line-height:10.4px;color:#3d69c8;letter-spacing:0.042px;left:424.60px;"><span>accessors-smart-2.5.1.jar</span></div>
<div class="t" style="top:629.40px;font-size:10.4px;line-height:10.4px;color:#222;letter-spacing:0.136px;left:641.00px;"><span>Java reflect give poor performance on gett...</span></div>
<div class="t" style="top:629.40px;font-size:10.4px;line-height:10.4px;color:#222;letter-spacing:-0.233px;left:858.70px;"><span>Apache 2.0</span></div>
<div class="a" style="left:375px;top:643px;width:19.5px;height:1px;background:#d6d6d6;"></div>
<div class="a" style="left:395.5px;top:643px;width:26.0px;height:1px;background:#d6d6d6;"></div>
<div class="a" style="left:422.5px;top:643px;width:216.0px;height:1px;background:#d6d6d6;"></div>
<div class="a" style="left:639.5px;top:643px;width:216.5px;height:1px;background:#d6d6d6;"></div>
<div class="a" style="left:857px;top:643px;width:204px;height:1px;background:#d6d6d6;"></div>
<div class="a" style="left:379px;top:650px;width:11px;height:11px;background:#fff;border:1px solid #8a8a8a;border-radius:2px;"></div>
<div class="t" style="top:649.60px;font-size:10.4px;line-height:10.4px;color:#3d69c8;letter-spacing:0.042px;left:424.60px;"><span>angus-activation-2.0.2.jar</span></div>
<div class="t" style="top:651.30px;font-size:10.4px;line-height:10.4px;color:#222;letter-spacing:0.136px;left:641.00px;"><span>${project.name} Implementation</span></div>
<div class="t" style="top:651.30px;font-size:10.4px;line-height:10.4px;color:#222;letter-spacing:-0.233px;left:858.70px;"><span>BSD 3</span></div>
<div class="a" style="left:375px;top:665px;width:19.5px;height:1px;background:#d6d6d6;"></div>
<div class="a" style="left:395.5px;top:665px;width:26.0px;height:1px;background:#d6d6d6;"></div>
<div class="a" style="left:422.5px;top:665px;width:216.0px;height:1px;background:#d6d6d6;"></div>
<div class="a" style="left:639.5px;top:665px;width:216.5px;height:1px;background:#d6d6d6;"></div>
<div class="a" style="left:857px;top:665px;width:204px;height:1px;background:#d6d6d6;"></div>
<div class="a" style="left:379px;top:672px;width:11px;height:11px;background:#fff;border:1px solid #8a8a8a;border-radius:2px;"></div>
<div class="t" style="top:671.50px;font-size:10.4px;line-height:10.4px;color:#3d69c8;letter-spacing:0.042px;left:424.60px;"><span>antlr4-runtime-4.13.0.jar</span></div>
<div class="t" style="top:673.20px;font-size:10.4px;line-height:10.4px;color:#222;letter-spacing:0.136px;left:641.00px;"><span>The ANTLR 4 Runtime</span></div>
<div class="t" style="top:673.20px;font-size:10.4px;line-height:10.4px;color:#222;letter-spacing:-0.233px;left:858.70px;"><span>ANTLR 2, BSD 3</span></div>
<div class="a" style="left:375px;top:687px;width:19.5px;height:1px;background:#d6d6d6;"></div>
<div class="a" style="left:395.5px;top:687px;width:26.0px;height:1px;background:#d6d6d6;"></div>
<div class="a" style="left:422.5px;top:687px;width:216.0px;height:1px;background:#d6d6d6;"></div>
<div class="a" style="left:639.5px;top:687px;width:216.5px;height:1px;background:#d6d6d6;"></div>
<div class="a" style="left:857px;top:687px;width:204px;height:1px;background:#d6d6d6;"></div>
<div class="a" style="left:379px;top:694px;width:11px;height:11px;background:#fff;border:1px solid #8a8a8a;border-radius:2px;"></div>
<div class="t" style="top:693.40px;font-size:10.4px;line-height:10.4px;color:#3d69c8;letter-spacing:0.042px;left:424.60px;"><span>asciidoctorj-2.5.13.jar</span></div>
<div class="t" style="top:695.10px;font-size:10.4px;line-height:10.4px;color:#222;letter-spacing:0.065px;left:641.00px;"><span>AsciidoctorJ provides Java bindings for the ...</span></div>
<div class="t" style="top:695.10px;font-size:10.4px;line-height:10.4px;color:#222;letter-spacing:-0.233px;left:858.70px;"><span>Apache 2.0</span></div>
<div class="a" style="left:375px;top:709px;width:19.5px;height:1px;background:#d6d6d6;"></div>
<div class="a" style="left:395.5px;top:709px;width:26.0px;height:1px;background:#d6d6d6;"></div>
<div class="a" style="left:422.5px;top:709px;width:216.0px;height:1px;background:#d6d6d6;"></div>
<div class="a" style="left:639.5px;top:709px;width:216.5px;height:1px;background:#d6d6d6;"></div>
<div class="a" style="left:857px;top:709px;width:204px;height:1px;background:#d6d6d6;"></div>
<div class="a" style="left:379px;top:716px;width:11px;height:11px;background:#fff;border:1px solid #8a8a8a;border-radius:2px;"></div>
<div class="t" style="top:715.30px;font-size:10.4px;line-height:10.4px;color:#3d69c8;letter-spacing:0.042px;left:424.60px;"><span>asciidoctorj-api-2.5.13.jar</span></div>
<div class="t" style="top:717.00px;font-size:10.4px;line-height:10.4px;color:#222;letter-spacing:0.136px;left:641.00px;"><span>API for AsciidoctorJ</span></div>
<div class="t" style="top:717.00px;font-size:10.4px;line-height:10.4px;color:#222;letter-spacing:-0.233px;left:858.70px;"><span>Apache 2.0</span></div>
<div class="a" style="left:375px;top:731px;width:19.5px;height:1px;background:#d6d6d6;"></div>
<div class="a" style="left:395.5px;top:731px;width:26.0px;height:1px;background:#d6d6d6;"></div>
<div class="a" style="left:422.5px;top:731px;width:216.0px;height:1px;background:#d6d6d6;"></div>
<div class="a" style="left:639.5px;top:731px;width:216.5px;height:1px;background:#d6d6d6;"></div>
<div class="a" style="left:857px;top:731px;width:204px;height:1px;background:#d6d6d6;"></div>
<div class="a" style="left:379px;top:737px;width:11px;height:11px;background:#fff;border:1px solid #8a8a8a;border-radius:2px;"></div>
<div class="t" style="top:737.20px;font-size:10.4px;line-height:10.4px;color:#3d69c8;letter-spacing:0.042px;left:424.60px;"><span>asm-9.5.jar</span></div>
<div class="t" style="top:738.90px;font-size:10.4px;line-height:10.4px;color:#222;letter-spacing:-0.045px;left:641.00px;"><span>ASM, a very small and fast Java bytecode m...</span></div>
<div class="t" style="top:738.90px;font-size:10.4px;line-height:10.4px;color:#222;letter-spacing:-0.233px;left:858.70px;"><span>Apache 2.0</span></div>
<div class="a" style="left:375px;top:753px;width:19.5px;height:1px;background:#d6d6d6;"></div>
<div class="a" style="left:395.5px;top:753px;width:26.0px;height:1px;background:#d6d6d6;"></div>
<div class="a" style="left:422.5px;top:753px;width:216.0px;height:1px;background:#d6d6d6;"></div>
<div class="a" style="left:639.5px;top:753px;width:216.5px;height:1px;background:#d6d6d6;"></div>
<div class="a" style="left:857px;top:753px;width:204px;height:1px;background:#d6d6d6;"></div>
<div class="a" style="left:379px;top:759px;width:11px;height:11px;background:#fff;border:1px solid #8a8a8a;border-radius:2px;"></div>
<div class="t" style="top:759.10px;font-size:10.4px;line-height:10.4px;color:#3d69c8;letter-spacing:0.042px;left:424.60px;"><span>asm-analysis-9.2.jar</span></div>
<div class="t" style="top:760.80px;font-size:10.4px;line-height:10.4px;color:#222;letter-spacing:-0.022px;left:641.00px;"><span>Static code analysis API of ASM, a very sma...</span></div>
<div class="t" style="top:760.80px;font-size:10.4px;line-height:10.4px;color:#222;letter-spacing:-0.233px;left:858.70px;"><span>Apache 2.0</span></div>
<div class="a" style="left:375px;top:774px;width:19.5px;height:1px;background:#d6d6d6;"></div>
<div class="a" style="left:395.5px;top:774px;width:26.0px;height:1px;background:#d6d6d6;"></div>
<div class="a" style="left:422.5px;top:774px;width:216.0px;height:1px;background:#d6d6d6;"></div>
<div class="a" style="left:639.5px;top:774px;width:216.5px;height:1px;background:#d6d6d6;"></div>
<div class="a" style="left:857px;top:774px;width:204px;height:1px;background:#d6d6d6;"></div>
<div class="a" style="left:379px;top:781px;width:11px;height:11px;background:#fff;border:1px solid #8a8a8a;border-radius:2px;"></div>
<div class="t" style="top:781.00px;font-size:10.4px;line-height:10.4px;color:#3d69c8;letter-spacing:0.042px;left:424.60px;"><span>asm-commons-9.2.jar</span></div>
<div class="t" style="top:782.70px;font-size:10.4px;line-height:10.4px;color:#222;letter-spacing:0.045px;left:641.00px;"><span>Usefull class adapters based on ASM, a ver...</span></div>
<div class="t" style="top:782.70px;font-size:10.4px;line-height:10.4px;color:#222;letter-spacing:-0.233px;left:858.70px;"><span>Apache 2.0</span></div>
<div class="a" style="left:375px;top:796px;width:19.5px;height:1px;background:#d6d6d6;"></div>
<div class="a" style="left:395.5px;top:796px;width:26.0px;height:1px;background:#d6d6d6;"></div>
<div class="a" style="left:422.5px;top:796px;width:216.0px;height:1px;background:#d6d6d6;"></div>
<div class="a" style="left:639.5px;top:796px;width:216.5px;height:1px;background:#d6d6d6;"></div>
<div class="a" style="left:857px;top:796px;width:204px;height:1px;background:#d6d6d6;"></div>
<div class="a" style="left:379px;top:803px;width:11px;height:11px;background:#fff;border:1px solid #8a8a8a;border-radius:2px;"></div>
<div class="t" style="top:802.90px;font-size:10.4px;line-height:10.4px;color:#3d69c8;letter-spacing:0.042px;left:424.60px;"><span>asm-tree-9.2.jar</span></div>
<div class="t" style="top:804.60px;font-size:10.4px;line-height:10.4px;color:#222;letter-spacing:-0.065px;left:641.00px;"><span>Tree API of ASM, a very small and fast Java ...</span></div>
<div class="t" style="top:804.60px;font-size:10.4px;line-height:10.4px;color:#222;letter-spacing:-0.233px;left:858.70px;"><span>Apache 2.0</span></div>
<div class="a" style="left:375px;top:818px;width:19.5px;height:1px;background:#d6d6d6;"></div>
<div class="a" style="left:395.5px;top:818px;width:26.0px;height:1px;background:#d6d6d6;"></div>
<div class="a" style="left:422.5px;top:818px;width:216.0px;height:1px;background:#d6d6d6;"></div>
<div class="a" style="left:639.5px;top:818px;width:216.5px;height:1px;background:#d6d6d6;"></div>
<div class="a" style="left:857px;top:818px;width:204px;height:1px;background:#d6d6d6;"></div>
<div class="a" style="left:379px;top:825px;width:11px;height:11px;background:#fff;border:1px solid #8a8a8a;border-radius:2px;"></div>
<div class="t" style="top:824.80px;font-size:10.4px;line-height:10.4px;color:#3d69c8;letter-spacing:0.042px;left:424.60px;"><span>asm-util-9.2.jar</span></div>
<div class="t" style="top:826.50px;font-size:10.4px;line-height:10.4px;color:#222;letter-spacing:0.0px;left:641.00px;"><span>Utilities for ASM, a very small and fast Java ...</span></div>
<div class="t" style="top:826.50px;font-size:10.4px;line-height:10.4px;color:#222;letter-spacing:-0.233px;left:858.70px;"><span>Apache 2.0</span></div>
<div class="a" style="left:375px;top:840px;width:19.5px;height:1px;background:#d6d6d6;"></div>
<div class="a" style="left:395.5px;top:840px;width:26.0px;height:1px;background:#d6d6d6;"></div>
<div class="a" style="left:422.5px;top:840px;width:216.0px;height:1px;background:#d6d6d6;"></div>
<div class="a" style="left:639.5px;top:840px;width:216.5px;height:1px;background:#d6d6d6;"></div>
<div class="a" style="left:857px;top:840px;width:204px;height:1px;background:#d6d6d6;"></div>
<div class="a" style="left:379px;top:847px;width:11px;height:11px;background:#fff;border:1px solid #8a8a8a;border-radius:2px;"></div>
<div class="t" style="top:846.70px;font-size:10.4px;line-height:10.4px;color:#3d69c8;letter-spacing:0.042px;left:424.60px;"><span>aspectjweaver-1.9.22.jar</span></div>
<div class="t" style="top:848.40px;font-size:10.4px;line-height:10.4px;color:#222;letter-spacing:-0.111px;left:641.00px;"><span>The AspectJ weaver applies aspects to Java ...</span></div>
<div class="t" style="top:848.40px;font-size:10.4px;line-height:10.4px;color:#222;letter-spacing:-0.19px;left:858.70px;"><span>Eclipse 1.0, Eclipse 2.0, Apache 1.1, BSD 3</span></div>
<div class="a" style="left:375px;top:861.6px;width:686px;height:1.8px;background:#e9e9e9;"></div>
<div class="a" style="left:1061px;top:623px;width:15px;height:240px;background:#f1f1f1;"></div>
<div class="a" style="left:1061.5px;top:640.4px;width:12.5px;height:22px;background:#c8c8c8;"></div>
<svg class="a" style="left:1061px;top:624px" width="15" height="14" viewBox="0 0 15 14"><path d="M2.8,9.5 L6.5,5.8 L10.2,9.5 Z" fill="#b0b0b0"/></svg>
<svg class="a" style="left:1061px;top:846px" width="15" height="14" viewBox="0 0 15 14"><path d="M2.8,5.5 L6.5,9.2 L10.2,5.5 Z" fill="#555"/></svg>
<svg class="a" style="left:638px;top:870px" width="180" height="20" viewBox="0 0 180 20"><circle cx="9.5" cy="9.4" r="6.6" fill="#e7e7e7"/><rect x="6.2" y="6" width="1.5" height="7" fill="#9a9a9a"/><path d="M12.8,6 L8,9.5 L12.8,13 Z" fill="#9a9a9a"/>
<circle cx="33.8" cy="9.4" r="6.6" fill="#e7e7e7"/><path d="M35.8,6 L31,9.5 L35.8,13 Z" fill="#9a9a9a"/>
<circle cx="140.6" cy="9.8" r="6.6" fill="#c6d6f0"/><path d="M138.6,6.3 L143.6,9.8 L138.6,13.3 Z" fill="#333"/>
<circle cx="164.9" cy="9.8" r="6.6" fill="#c6d6f0"/><path d="M161.6,6.3 L166.2,9.8 L161.6,13.3 Z" fill="#333"/><rect x="166.4" y="6.3" width="1.6" height="7" fill="#333"/></svg>
<div class="t" style="top:876.56px;font-size:12.1px;line-height:12.1px;color:#222;left:325.50px;width:800px;text-align:center;"><span>1-100 of 180</span></div>
<svg class="a" style="left:1210px;top:570px" width="300" height="300" viewBox="0 0 300 300"><path d="M147.100,6.600 A139.6,139.6 0 0 1 233.621,36.645 L189.989,91.893 A69.2,69.2 0 0 0 147.100,77.000 Z" fill="#84b126" stroke="rgba(255,255,255,0.6)" stroke-width="0.4"/><path d="M233.621,36.645 A139.6,139.6 0 0 1 274.532,89.197 L210.268,117.944 A69.2,69.2 0 0 0 189.989,91.893 Z" fill="#94c92e" stroke="rgba(255,255,255,0.6)" stroke-width="0.4"/><path d="M274.532,89.197 A139.6,139.6 0 0 1 278.029,97.768 L212.002,122.192 A69.2,69.2 0 0 0 210.268,117.944 Z" fill="#9fd13b" stroke="rgba(255,255,255,0.6)" stroke-width="0.4"/><path d="M278.029,97.768 A139.6,139.6 0 0 1 280.882,106.318 L213.416,126.430 A69.2,69.2 0 0 0 212.002,122.192 Z" fill="#76a125" stroke="rgba(255,255,255,0.6)" stroke-width="0.4"/><path d="M280.882,106.318 A139.6,139.6 0 0 1 282.786,113.374 L214.360,129.928 A69.2,69.2 0 0 0 213.416,126.430 Z" fill="#84b126" stroke="rgba(255,255,255,0.6)" stroke-width="0.4"/><path d="M282.786,113.374 A139.6,139.6 0 0 1 283.750,117.652 L214.838,132.049 A69.2,69.2 0 0 0 214.360,129.928 Z" fill="#94c92e" stroke="rgba(255,255,255,0.6)" stroke-width="0.4"/><path d="M283.750,117.652 A139.6,139.6 0 0 1 285.130,125.325 L215.522,135.852 A69.2,69.2 0 0 0 214.838,132.049 Z" fill="#95a3a6" stroke="rgba(255,255,255,0.6)" stroke-width="0.4"/><path d="M285.130,125.325 A139.6,139.6 0 0 1 285.718,129.671 L215.813,138.006 A69.2,69.2 0 0 0 215.522,135.852 Z" fill="#a5afb1" stroke="rgba(255,255,255,0.6)" stroke-width="0.4"/><path d="M285.718,129.671 A139.6,139.6 0 0 1 286.169,134.033 L216.037,140.169 A69.2,69.2 0 0 0 215.813,138.006 Z" fill="#b8c1c1" stroke="rgba(255,255,255,0.6)" stroke-width="0.4"/><path d="M286.169,134.033 A139.6,139.6 0 0 1 286.652,142.546 L216.276,144.389 A69.2,69.2 0 0 0 216.037,140.169 Z" fill="#3aa58b" stroke="rgba(255,255,255,0.6)" stroke-width="0.4"/><path d="M286.652,142.546 A139.6,139.6 0 0 1 286.700,146.444 L216.300,146.321 A69.2,69.2 0 0 0 216.276,144.389 Z" fill="#d3cfaa" stroke="rgba(255,255,255,0.6)" stroke-width="0.4"/><path d="M286.700,146.444 A139.6,139.6 0 0 1 286.646,150.098 L216.273,148.132 A69.2,69.2 0 0 0 216.300,146.321 Z" fill="#d2280f" stroke="rgba(255,255,255,0.6)" stroke-width="0.4"/><path d="M286.646,150.098 A139.6,139.6 0 0 1 281.292,184.679 L213.619,165.274 A69.2,69.2 0 0 0 216.273,148.132 Z" fill="#f5a01f" stroke="rgba(255,255,255,0.6)" stroke-width="0.4"/><path d="M281.292,184.679 A139.6,139.6 0 0 1 272.357,207.834 L209.190,176.752 A69.2,69.2 0 0 0 213.619,165.274 Z" fill="#f5a935" stroke="rgba(255,255,255,0.6)" stroke-width="0.4"/><path d="M272.357,207.834 A139.6,139.6 0 0 1 258.000,230.990 L202.073,188.230 A69.2,69.2 0 0 0 209.190,176.752 Z" fill="#f5b04d" stroke="rgba(255,255,255,0.6)" stroke-width="0.4"/><path d="M258.000,230.990 A139.6,139.6 0 0 1 239.602,250.754 L192.953,198.028 A69.2,69.2 0 0 0 202.073,188.230 Z" fill="#f7c068" stroke="rgba(255,255,255,0.6)" stroke-width="0.4"/><path d="M239.602,250.754 A139.6,139.6 0 0 1 236.833,253.140 L191.581,199.210 A69.2,69.2 0 0 0 192.953,198.028 Z" fill="#f5a01f" stroke="rgba(255,255,255,0.6)" stroke-width="0.4"/><path d="M236.833,253.140 A139.6,139.6 0 1 1 147.098,6.600 L147.099,77.000 A69.2,69.2 0 1 0 191.581,199.210 Z" fill="#76a125" stroke="rgba(255,255,255,0.6)" stroke-width="0.4"/></svg>
<div class="a" style="left:1607px;top:580.2px;width:11px;height:11px;background:#d2280f;"></div>
<div class="t" style="top:581.51px;font-size:10.035px;line-height:10.035px;color:#666;left:1624.60px;"><span>GPL 2.0</span></div>
<div class="a" style="left:1607px;top:600.94px;width:11px;height:11px;background:#f5a01f;"></div>
<div class="t" style="top:602.25px;font-size:10.035px;line-height:10.035px;color:#666;left:1624.60px;"><span>Eclipse 2.0</span></div>
<div class="a" style="left:1607px;top:621.6800000000001px;width:11px;height:11px;background:#f5a935;"></div>
<div class="t" style="top:622.99px;font-size:10.035px;line-height:10.035px;color:#666;left:1624.60px;"><span>GPL 2.0 Classpath</span></div>
<div class="a" style="left:1607px;top:642.4200000000001px;width:11px;height:11px;background:#f5b04d;"></div>
<div class="t" style="top:643.73px;font-size:10.035px;line-height:10.035px;color:#666;left:1624.60px;"><span>LGPL 2.1</span></div>
<div class="a" style="left:1607px;top:663.1600000000001px;width:11px;height:11px;background:#f7c068;"></div>
<div class="t" style="top:664.47px;font-size:10.035px;line-height:10.035px;color:#666;left:1624.60px;"><span>Eclipse 1.0</span></div>
<div class="a" style="left:1607px;top:683.9000000000001px;width:11px;height:11px;background:#f5a01f;"></div>
<div class="t" style="top:685.21px;font-size:10.035px;line-height:10.035px;color:#666;left:1624.60px;"><span>LGPL 3.0</span></div>
<div class="a" style="left:1607px;top:704.6400000000001px;width:11px;height:11px;background:#76a125;"></div>
<div class="t" style="top:705.95px;font-size:10.035px;line-height:10.035px;color:#666;left:1624.60px;margin-left:3px;"><span>Apache 2.0</span></div>
<div class="a" style="left:1607px;top:725.38px;width:11px;height:11px;background:#84b126;"></div>
<div class="t" style="top:726.69px;font-size:10.035px;line-height:10.035px;color:#666;left:1624.60px;"><span>MIT</span></div>
<div class="a" style="left:1607px;top:746.12px;width:11px;height:11px;background:#94c72c;"></div>
<div class="t" style="top:747.43px;font-size:10.035px;line-height:10.035px;color:#666;left:1624.60px;"><span>BSD 3</span></div>
<div class="a" style="left:1607px;top:766.86px;width:11px;height:11px;background:#a0d53b;"></div>
<div class="t" style="top:768.17px;font-size:10.035px;line-height:10.035px;color:#666;left:1624.60px;"><span>CDDL 1.1</span></div>
<div class="a" style="left:1607px;top:787.6px;width:11px;height:11px;background:#76a125;"></div>
<div class="t" style="top:788.91px;font-size:10.035px;line-height:10.035px;color:#666;left:1624.60px;"><span>Public Domain</span></div>
<div class="a" style="left:1727.2px;top:580.2px;width:11px;height:11px;background:#84b126;"></div>
<div class="t" style="top:581.51px;font-size:10.035px;line-height:10.035px;color:#666;left:1744.30px;"><span>BSD 2</span></div>
<div class="a" style="left:1727.2px;top:600.94px;width:11px;height:11px;background:#94c92e;"></div>
<div class="t" style="top:602.25px;font-size:10.035px;line-height:10.035px;color:#666;left:1744.30px;margin-left:3px;"><span>Apache 1.1</span></div>
<div class="a" style="left:1727.2px;top:621.6800000000001px;width:11px;height:11px;background:#95a3a6;"></div>
<div class="t" style="top:622.99px;font-size:10.035px;line-height:10.035px;color:#666;left:1744.30px;"><span>CC0</span></div>
<div class="a" style="left:1727.2px;top:642.4200000000001px;width:11px;height:11px;background:#a5afb1;"></div>
<div class="t" style="top:643.73px;font-size:10.035px;line-height:10.035px;color:#666;left:1744.30px;"><span>LGPL</span></div>
<div class="a" style="left:1727.2px;top:663.1600000000001px;width:11px;height:11px;background:#b8c1c1;"></div>
<div class="t" style="top:664.47px;font-size:10.035px;line-height:10.035px;color:#666;left:1744.30px;margin-left:3px;"><span>ANTLR 2</span></div>
<div class="a" style="left:1727.2px;top:683.9000000000001px;width:11px;height:11px;background:#3aa58b;"></div>
<div class="t" style="top:685.21px;font-size:10.035px;line-height:10.035px;color:#666;left:1744.30px;"><span>Others</span></div>
<div class="a" style="left:1727.2px;top:704.6400000000001px;width:11px;height:11px;background:#d3cfaa;"></div>
<div class="t" style="top:705.95px;font-size:10.035px;line-height:10.035px;color:#666;left:1744.30px;"><span>Requires Review</span></div>
<div class="t" style="top:878.91px;font-size:14.522px;line-height:14.522px;color:#222;left:1102.60px;"><span>Total License Types: <b>18</b></span></div>
</body></html>
